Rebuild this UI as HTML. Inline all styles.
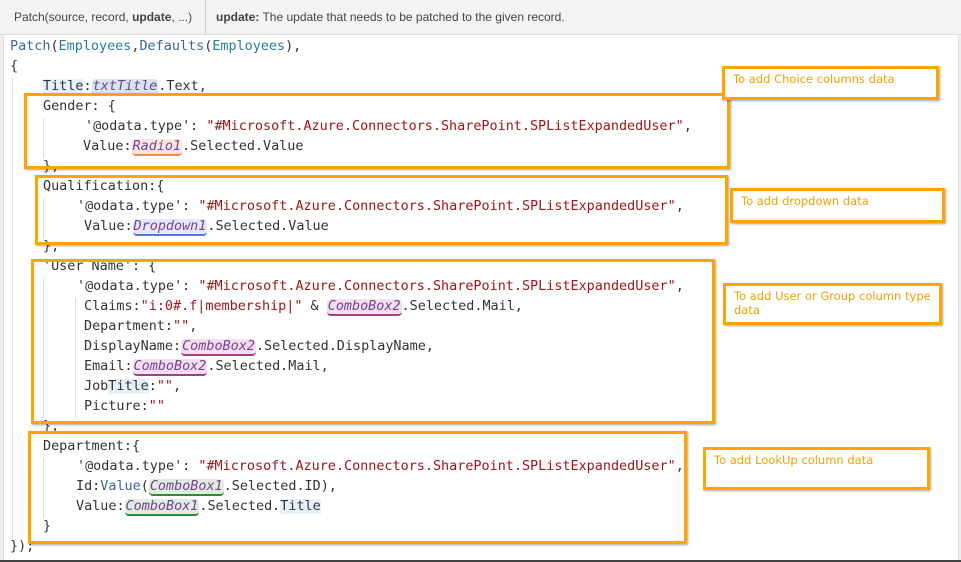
<!DOCTYPE html>
<html><head><meta charset="utf-8"><style>
*{margin:0;padding:0;box-sizing:border-box}
body{width:961px;height:562px;overflow:hidden;background:#fff;position:relative;font-family:"DejaVu Sans Mono","Liberation Mono",monospace;font-size:13.45px;color:#333}
.hdr{position:absolute;left:0;top:0;width:961px;height:35px;background:#f3f3f3;border-bottom:1px solid #ddd;font-family:"Liberation Sans",sans-serif;font-size:12px;color:#444}
.hdr span{position:absolute;top:10px}
.div{position:absolute;left:205px;top:0;width:1px;height:35px;background:#ccc}
.l{position:absolute;white-space:pre;height:20px;line-height:20px}
.k{color:#3f62a3}.t{color:#267f99}.s{color:#a31515}
.c{font-style:italic;color:#7a3e9d;border-radius:4px;padding:0 1px}
.ob{position:absolute;border:3px solid #ffa500;box-shadow:1px 1px 2px rgba(0,0,0,.35)}
.lb{position:absolute;border:3px solid #ffa500;box-shadow:1px 1px 2px rgba(0,0,0,.35);font-family:"DejaVu Sans",sans-serif;font-size:11.5px;color:#f5a000;padding:3px 8px;line-height:14px;background:#fff}
.g{position:absolute;width:1px;background:#ddd}
</style></head><body>
<div class="hdr"><span style="left:14px">Patch(source, record, <b>update</b>, ...)</span><div class="div"></div><span style="left:216px"><b>update:</b> The update that needs to be patched to the given record.</span></div>
<div style="position:absolute;left:0;top:35px;width:4px;height:527px;background:#eee;border-right:1px solid #ddd"></div>
<div style="position:absolute;left:958px;top:35px;width:3px;height:527px;background:#eee;border-left:1px solid #ddd"></div>
<div style="position:absolute;left:0;top:560px;width:961px;height:2px;background:#444"></div>
<div class="g" style="left:12px;top:78px;height:460px"></div>
<div class="g" style="left:43px;top:118px;height:40px"></div>
<div class="g" style="left:43px;top:198px;height:40px"></div>
<div class="g" style="left:43px;top:278px;height:140px"></div>
<div class="g" style="left:75px;top:298px;height:120px"></div>
<div class="g" style="left:43px;top:458px;height:60px"></div>

<div class="l" style="left:10px;top:37px"><span class="k">Patch</span>(<span class="t">Employees</span>,<span class="k">Defaults</span>(<span class="t">Employees</span>),</div>
<div class="l" style="left:10px;top:57px">{</div>
<div class="l" style="left:43px;top:77px"><span style="background:#e5f0fb">Title</span>:<span class="c" style="background:#d4e6ea;border-bottom:2px solid #2a6f7d">txtTitle</span>.Text,</div>
<div class="l" style="left:43px;top:97px">Gender: {</div>
<div class="l" style="left:85px;top:117px">'@odata.type': <span class="s">"#Microsoft.Azure.Connectors.SharePoint.SPListExpandedUser"</span>,</div>
<div class="l" style="left:83px;top:137px">Value:<span class="c" style="background:#fbe6dc;border-bottom:2px solid #f08a50">Radio1</span>.Selected.Value</div>
<div class="l" style="left:43px;top:157px">},</div>
<div class="l" style="left:43px;top:177px">Qualification:{</div>
<div class="l" style="left:77px;top:197px">'@odata.type': <span class="s">"#Microsoft.Azure.Connectors.SharePoint.SPListExpandedUser"</span>,</div>
<div class="l" style="left:84px;top:217px">Value:<span class="c" style="background:#e4e8fa;border-bottom:2px solid #5577dd">Dropdown1</span>.Selected.Value</div>
<div class="l" style="left:43px;top:237px">},</div>
<div class="l" style="left:43px;top:257px">'User Name': {</div>
<div class="l" style="left:77px;top:277px">'@odata.type': <span class="s">"#Microsoft.Azure.Connectors.SharePoint.SPListExpandedUser"</span>,</div>
<div class="l" style="left:84px;top:297px">Claims:<span class="s">"i:0#.f|membership|"</span> &amp; <span class="c" style="background:#f3e0ee;border-bottom:2px solid #a63c86">ComboBox2</span>.Selected.Mail,</div>
<div class="l" style="left:84px;top:317px">Department:<span class="s">""</span>,</div>
<div class="l" style="left:84px;top:337px">DisplayName:<span class="c" style="background:#f3e0ee;border-bottom:2px solid #a63c86">ComboBox2</span>.Selected.DisplayName,</div>
<div class="l" style="left:84px;top:357px">Email:<span class="c" style="background:#f3e0ee;border-bottom:2px solid #a63c86">ComboBox2</span>.Selected.Mail,</div>
<div class="l" style="left:84px;top:377px">Job<span style="background:#e5f0fb">Title</span>:<span class="s">""</span>,</div>
<div class="l" style="left:84px;top:397px">Picture:<span class="s">""</span></div>
<div class="l" style="left:43px;top:417px">},</div>
<div class="l" style="left:43px;top:437px">Department:{</div>
<div class="l" style="left:77px;top:457px">'@odata.type': <span class="s">"#Microsoft.Azure.Connectors.SharePoint.SPListExpandedUser"</span>,</div>
<div class="l" style="left:76px;top:477px">Id:<span class="k">Value</span>(<span class="c" style="background:#ddeedd;border-bottom:2px solid #2f8a3a">ComboBox1</span>.Selected.ID),</div>
<div class="l" style="left:76px;top:497px">Value:<span class="c" style="background:#ddeedd;border-bottom:2px solid #2f8a3a">ComboBox1</span>.Selected.<span style="background:#e5f0fb">Title</span></div>
<div class="l" style="left:43px;top:517px">}</div>
<div class="l" style="left:10px;top:537px">});</div>

<div class="ob" style="left:24px;top:93px;width:706px;height:76px"></div>
<div class="ob" style="left:35px;top:175px;width:693px;height:70px"></div>
<div class="ob" style="left:31px;top:259px;width:684px;height:165px"></div>
<div class="ob" style="left:28px;top:431px;width:659px;height:113px"></div>

<div class="lb" style="left:722px;top:66px;width:217px;height:34px">To add Choice columns data</div>
<div class="lb" style="left:730px;top:188px;width:215px;height:35px">To add dropdown data</div>
<div class="lb" style="left:723px;top:283px;width:219px;height:42px">To add User or Group column type data</div>
<div class="lb" style="left:703px;top:447px;width:227px;height:43px">To add LookUp column data</div>
</body></html>
